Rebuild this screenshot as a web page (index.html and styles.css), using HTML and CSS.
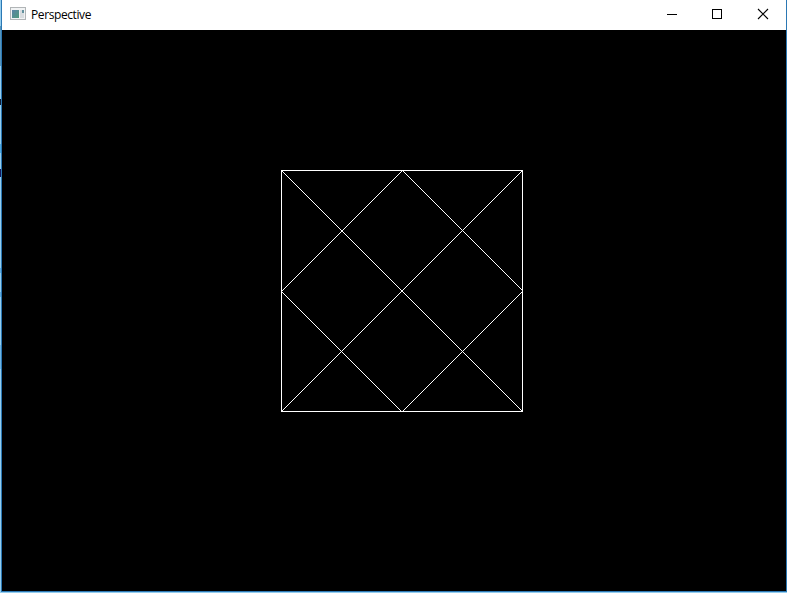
FILE: index.html
```html
<!DOCTYPE html>
<html lang="en">
<head>
<meta charset="utf-8">
<title>Perspective</title>
<link rel="stylesheet" href="styles.css">
</head>
<body>
<div class="window">
  <header class="titlebar">
    <svg class="app-icon" width="16" height="14" viewBox="0 0 16 14" shape-rendering="crispEdges">
      <defs><linearGradient id="pane" x1="0" y1="0" x2="1" y2="1"><stop offset="0" stop-color="#5b83a6"/><stop offset="1" stop-color="#4f9a7c"/></linearGradient></defs>
      <rect x=".5" y=".5" width="15" height="12" fill="#f1f3f4" stroke="#b1b5b7"/>
      <rect x="2" y="3" width="7" height="8" fill="url(#pane)"/>
      <rect x="10" y="3" width="4" height="8" fill="#d8dde0"/>
      <rect x="12" y="3" width="2" height="3" fill="#62919e"/>
    </svg>
    <span class="title">Perspective</span>
    <div class="controls">
      <svg width="45" height="30" viewBox="0 0 45 30" shape-rendering="crispEdges"><path d="M12 14.5h10" stroke="#000"/></svg>
      <svg width="46" height="30" viewBox="0 0 46 30" shape-rendering="crispEdges"><rect x="12.5" y="9.5" width="9" height="9" fill="none" stroke="#000"/></svg>
      <svg width="40" height="30" viewBox="0 0 40 30"><path d="M12 9l10 10M22 9l-10 10" stroke="#000" stroke-width="1.1"/></svg>
    </div>
  </header>
  <main class="canvas">
    <svg class="wireframe" width="242" height="242" viewBox="0 0 242 242" shape-rendering="crispEdges" fill="none" stroke="#fff">
      <rect x=".5" y=".5" width="241" height="241"/>
      <path d="M.5.5l241 241M.5 241.5l241-241M121.5.5l120 120M.5 121.5l121-121M.5 121.5l120 120M121.5 241.5l120-120"/>
    </svg>
  </main>
</div>
</body>
</html>
```
FILE: styles.css
```css
* { box-sizing: border-box; }
body {
  margin: 0;
  height: 593px;
  overflow: hidden;
  padding: 0 0 1px 1px;
  background:
    linear-gradient(#4ca9e2, #4ca9e2) 0 144px / 1px 9px no-repeat,
    linear-gradient(#15185c, #15185c) 0 169px / 1px 8px no-repeat,
    linear-gradient(#101c35, #101c35) 0 99px / 1px 6px no-repeat,
    linear-gradient(#5eabe0, #5eabe0) 0 268px / 1px 5px no-repeat,
    linear-gradient(#5eabe0, #5eabe0) 0 292px / 1px 5px no-repeat,
    linear-gradient(#6eb4e3, #6eb4e3) 0 345px / 1px 24px no-repeat,
    linear-gradient(#5795bd, #5795bd) 0 26px / 1px 40px no-repeat,
    #94cdee;
}
.window {
  display: flex;
  flex-direction: column;
  height: 592px;
  border: solid #2b78b4;
  border-width: 0 1px 1px;
  background: #000;
}
.titlebar {
  display: flex;
  align-items: center;
  flex: 0 0 30px;
  padding-left: 8px;
  background: #fff;
}
.app-icon { display: block; margin-top: -2px; }
.title {
  margin-left: 5px;
  font: 12px/30px "Open Sans", "Noto Sans", sans-serif;
  letter-spacing: -.4px;
  color: #000;
}
.controls { display: flex; margin-left: auto; }
.controls svg { display: block; }
.canvas { flex: 1; padding: 140px 0 0 279px; }
.wireframe { display: block; }
```
